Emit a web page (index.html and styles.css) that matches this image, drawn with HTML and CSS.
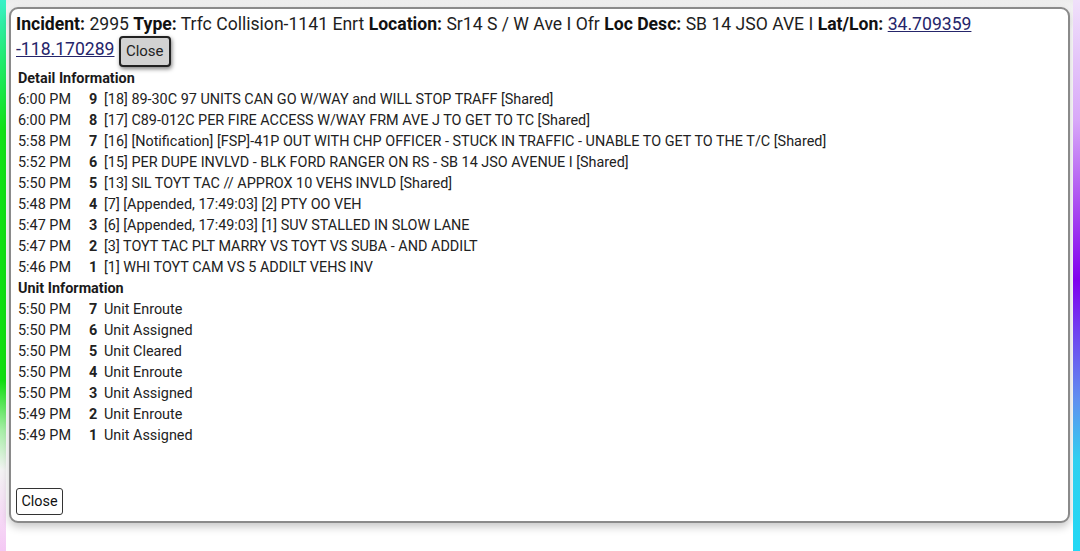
FILE: index.html
```html
<!DOCTYPE html>
<html>
<head>
<meta charset="utf-8">
<link rel="stylesheet" href="styles.css">
</head>
<body>
<div class="screen">
  <div class="edge edge-left"></div>
  <main class="page">
    <section class="dialog">
      <div class="title">
        <b>Incident:</b> 2995 <b>Type:</b> Trfc Collision-1141 Enrt <b>Location:</b> Sr14 S / W Ave I Ofr <b>Loc Desc:</b> SB 14 JSO AVE I <b>Lat/Lon:</b> <a class="link" href="#">34.709359</a> <a class="link" href="#">-118.170289</a> <button class="btn-top">Close</button>
      </div>
      <div class="section-head">Detail Information</div>
      <div class="rows">
        <span class="t">6:00 PM</span><b class="n">9</b><span class="d">[18] 89-30C 97 UNITS CAN GO W/WAY and WILL STOP TRAFF [Shared]</span>
        <span class="t">6:00 PM</span><b class="n">8</b><span class="d">[17] C89-012C PER FIRE ACCESS W/WAY FRM AVE J TO GET TO TC [Shared]</span>
        <span class="t">5:58 PM</span><b class="n">7</b><span class="d">[16] [Notification] [FSP]-41P OUT WITH CHP OFFICER - STUCK IN TRAFFIC - UNABLE TO GET TO THE T/C [Shared]</span>
        <span class="t">5:52 PM</span><b class="n">6</b><span class="d">[15] PER DUPE INVLVD - BLK FORD RANGER ON RS - SB 14 JSO AVENUE I [Shared]</span>
        <span class="t">5:50 PM</span><b class="n">5</b><span class="d">[13] SIL TOYT TAC // APPROX 10 VEHS INVLD [Shared]</span>
        <span class="t">5:48 PM</span><b class="n">4</b><span class="d">[7] [Appended, 17:49:03] [2] PTY OO VEH</span>
        <span class="t">5:47 PM</span><b class="n">3</b><span class="d">[6] [Appended, 17:49:03] [1] SUV STALLED IN SLOW LANE</span>
        <span class="t">5:47 PM</span><b class="n">2</b><span class="d">[3] TOYT TAC PLT MARRY VS TOYT VS SUBA - AND ADDILT</span>
        <span class="t">5:46 PM</span><b class="n">1</b><span class="d">[1] WHI TOYT CAM VS 5 ADDILT VEHS INV</span>
      </div>
      <div class="section-head">Unit Information</div>
      <div class="rows">
        <span class="t">5:50 PM</span><b class="n">7</b><span class="d">Unit Enroute</span>
        <span class="t">5:50 PM</span><b class="n">6</b><span class="d">Unit Assigned</span>
        <span class="t">5:50 PM</span><b class="n">5</b><span class="d">Unit Cleared</span>
        <span class="t">5:50 PM</span><b class="n">4</b><span class="d">Unit Enroute</span>
        <span class="t">5:50 PM</span><b class="n">3</b><span class="d">Unit Assigned</span>
        <span class="t">5:49 PM</span><b class="n">2</b><span class="d">Unit Enroute</span>
        <span class="t">5:49 PM</span><b class="n">1</b><span class="d">Unit Assigned</span>
      </div>
      <div class="footer">
        <button class="btn-bottom">Close</button>
      </div>
    </section>
  </main>
  <div class="edge edge-right"></div>
</div>
</body>
</html>
```
FILE: styles.css
```css
html, body {
  margin: 0;
  padding: 0;
}
body {
  font-family: Roboto, "Liberation Sans", sans-serif;
  color: #1a1a1a;
  background: #ffffff;
}
.screen {
  display: flex;
  width: 1080px;
  height: 551px;
  overflow: hidden;
}
.edge {
  width: 6px;
  flex: none;
}
.edge-left {
  background: linear-gradient(to bottom, #3af0c8 0px, #22ee70 60px, #12e418 130px, #10e010 380px, #a8f0a8 430px, #f4f4f4 470px, #f6d8f6 520px, #f4c8f4 551px);
}
.edge-right {
  width: 7px;
  background: linear-gradient(to bottom, #f0e0fa 0px, #d8a8f8 120px, #a848f0 210px, #8000ee 280px, #7040f0 330px, #6090f0 400px, #30d0f0 460px, #22d8f4 551px);
}
.page {
  flex: 1;
  background: linear-gradient(to bottom, #ececec 0px, #f2f2f2 8px, #ffffff 30px);
  padding: 7px 3px 0 3px;
}
.dialog {
  height: 509px;
  border: 2px solid #8a8a8a;
  border-radius: 9px;
  background: #ffffff;
  box-shadow: 0 4px 8px rgba(0, 0, 0, 0.22);
  padding: 3px 7px 0 5px;
  display: flex;
  flex-direction: column;
}
.title {
  font-size: 17.6px;
  line-height: 25px;
  color: #1e1e1e;
}
.title b {
  font-weight: 700;
  color: #111;
}
.link {
  color: #25256a;
  text-decoration: underline;
}
.btn-top {
  font-family: Roboto, "Liberation Sans", sans-serif;
  font-size: 15px;
  color: #222;
  background: #d2d2d2;
  border: 2px solid #222;
  border-radius: 4px;
  height: 31px;
  padding: 0 5px;
  margin: -5px 0 -5px 0;
  box-shadow: 1px 2px 4px rgba(0, 0, 0, 0.5);
  vertical-align: -1px;
}
.section-head {
  font-size: 14.4px;
  font-weight: 700;
  line-height: 21px;
  padding-left: 2px;
  color: #1a1a1a;
}
.title + .section-head {
  margin-top: 6px;
}
.rows {
  display: grid;
  grid-template-columns: 71px 15px auto;
  font-size: 14.4px;
  line-height: 21px;
  padding-left: 2px;
  color: #222;
}
.rows .n {
  font-weight: 700;
}
.footer {
  margin-top: auto;
  padding: 0 0 6px 0;
}
.btn-bottom {
  font-family: Roboto, "Liberation Sans", sans-serif;
  font-size: 14.4px;
  color: #111;
  background: #fff;
  border: 1.5px solid #333;
  border-radius: 3px;
  height: 27px;
  padding: 0 4px;
  width: 47px;
}
```
